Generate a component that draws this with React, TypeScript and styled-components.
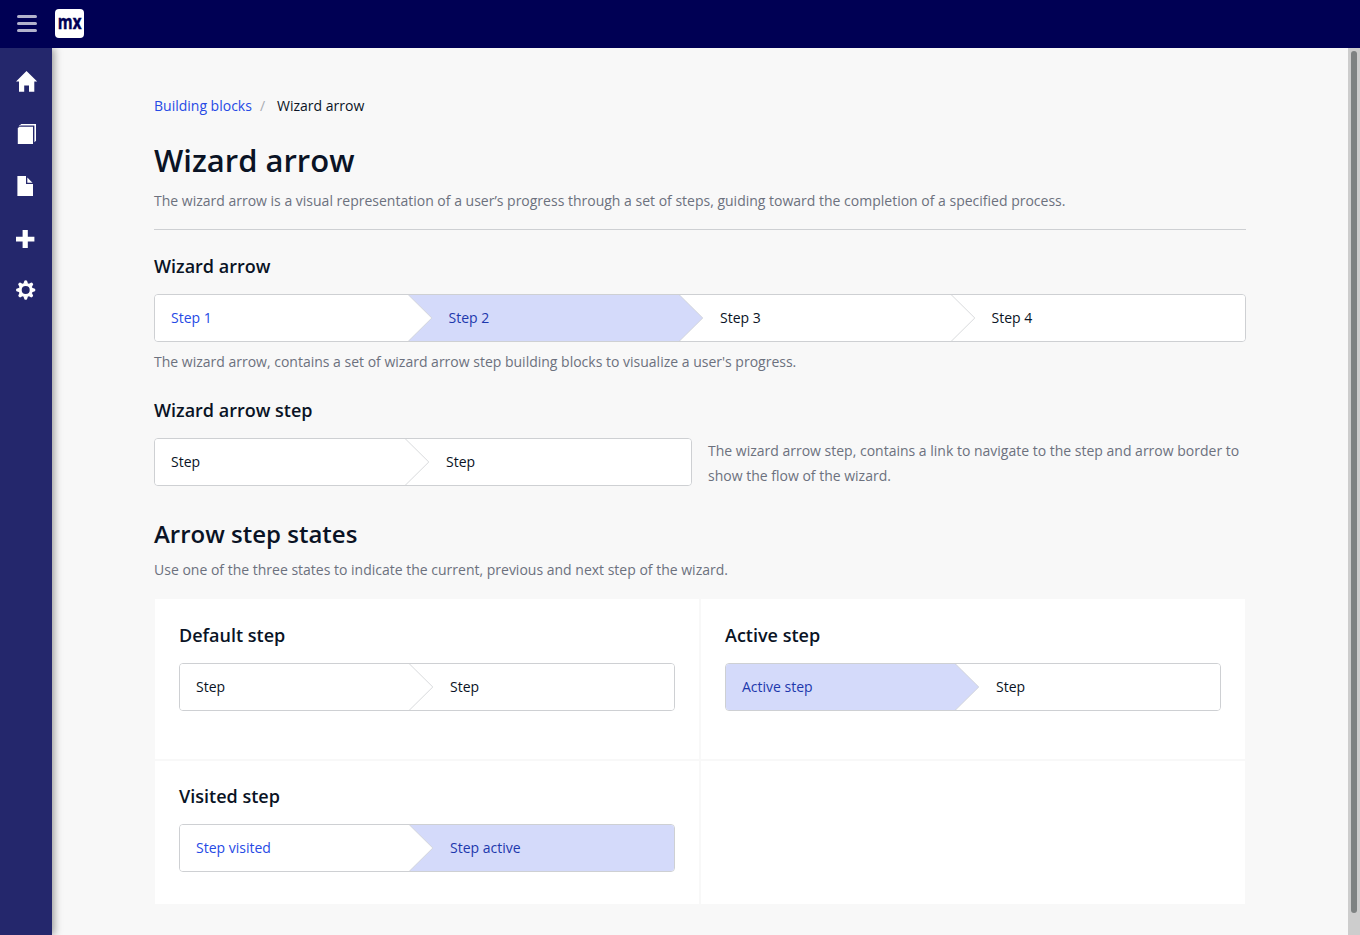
import React from "react";
import styled, { createGlobalStyle, css } from "styled-components";

const GlobalStyle = createGlobalStyle`
  *, *::before, *::after { box-sizing: border-box; }
  html, body { margin: 0; padding: 0; height: 100%; overflow: hidden; }
  body {
    background: #f8f8f8;
    color: #0a1325;
    font-family: "Open Sans", sans-serif;
    font-size: 14px;
    line-height: 20px;
  }
  h1, h2, h3, p, ul, ol { margin: 0; padding: 0; }
`;

const Page = styled.div`
  display: flex;
  flex-direction: column;
  height: 100vh;
`;

const TopBar = styled.header`
  display: flex;
  align-items: center;
  flex: none;
  height: 48px;
  padding-left: 17px;
  background: #000054;
`;

const MenuButton = styled.button`
  display: flex;
  flex-direction: column;
  gap: 4px;
  width: 20px;
  margin: -2px 18px 0 0;
  padding: 0;
  border: 0;
  background: none;
`;

const MenuLine = styled.span`
  height: 3px;
  border-radius: 2px;
  background: #b2b2cc;
`;

const Logo = styled.div`
  display: flex;
  align-items: center;
  justify-content: center;
  width: 29px;
  height: 29px;
  margin-top: -0.5px;
  border-radius: 4px;
  background: #fff;
`;

const LogoMark = styled.svg`
  display: block;
  overflow: visible;
  font-family: "Open Sans", sans-serif;
  font-size: 20px;
  font-weight: 700;
`;

const Body = styled.div`
  display: flex;
  flex: 1;
  min-height: 0;
`;

const Sidebar = styled.nav`
  display: flex;
  flex-direction: column;
  flex: none;
  width: 52px;
  padding-top: 8px;
  background: #24276c;
  box-shadow: 2px 0 8px rgba(0, 0, 0, 0.4);
  clip-path: inset(0 -30px 0 0);
`;

const NavItem = styled.a`
  display: block;
  flex: none;
  height: 52px;
  svg { display: block; }
`;

const Main = styled.main`
  flex: 1;
  min-width: 0;
  padding: 48px 102px 0;
`;

const ScrollTrack = styled.div`
  flex: none;
  width: 12px;
  padding: 3px;
  background: #cdcdcd;
`;

const ScrollThumb = styled.div`
  width: 6px;
  height: 862px;
  border-radius: 3px;
  background: #7e8282;
`;

const Breadcrumb = styled.ol`
  display: flex;
  height: 20px;
  list-style: none;
`;

const Crumb = styled.li<{ $link?: boolean }>`
  color: ${(p) => (p.$link ? "#264ae5" : "#0a1325")};
`;

const CrumbSeparator = styled.li`
  padding: 0 12px 0 8px;
  color: #a9acb3;
`;

const Title = styled.h1`
  margin-top: 23px;
  font-size: 31px;
  font-weight: 600;
  line-height: 42px;
`;

const Text = styled.p<{ $top?: number; $line?: number }>`
  margin-top: ${(p) => p.$top ?? 0}px;
  color: #6c717e;
  line-height: ${(p) => p.$line ?? 20}px;
`;

const Divider = styled.hr`
  height: 1px;
  margin: 18px 0 0;
  border: 0;
  background: #ced0d3;
`;

const Heading = styled.h2`
  margin-top: 29px;
  font-size: 24px;
  font-weight: 600;
  line-height: 34px;
`;

const Subheading = styled.h3<{ $top?: number }>`
  margin-top: ${(p) => p.$top ?? 0}px;
  font-size: 18px;
  font-weight: 600;
  line-height: 24px;
`;

const Split = styled.div`
  display: grid;
  grid-template-columns: 538px 1fr;
  column-gap: 16px;
`;

type StepState = "default" | "active" | "visited";

const stepColors: Record<StepState, { fill: string; text: string }> = {
  default: { fill: "#ffffff", text: "#0a1325" },
  active: { fill: "#d4dafa", text: "#1d38ad" },
  visited: { fill: "#ffffff", text: "#264ae5" },
};

const WizardBar = styled.div<{ $columns: string }>`
  display: grid;
  grid-template-columns: ${(p) => p.$columns};
  height: 48px;
  margin-top: 16px;
  overflow: hidden;
  border: 1px solid #ced0d3;
  border-radius: 4px;
`;

const StepBox = styled.div<{ $state: StepState; $first: boolean }>`
  position: relative;
  display: flex;
  align-items: center;
  padding-left: ${(p) => (p.$first ? 16 : 40)}px;
  ${(p) => css`
    background: ${stepColors[p.$state].fill};
    color: ${stepColors[p.$state].text};
  `}
`;

const Chevron = styled.svg`
  position: absolute;
  top: 0;
  left: -2px;
`;

const Tiles = styled.div`
  display: grid;
  grid-template-columns: 1fr 1fr;
  grid-template-rows: 162px 145px;
  margin-top: 18px;
`;

const Tile = styled.section<{ $top?: number }>`
  padding: ${(p) => p.$top ?? 24}px 24px 24px;
  border: 1px solid #f8f8f8;
  background: #fff;
`;

interface WizardStep {
  label: string;
  state?: StepState;
}

function Wizard({ steps, columns }: { steps: WizardStep[]; columns: string }) {
  return (
    <WizardBar $columns={columns}>
      {steps.map((step, i) => (
        <StepBox key={i} $state={step.state ?? "default"} $first={i === 0}>
          {i > 0 && (
            <Chevron width="26" height="46" viewBox="0 0 26 46">
              <path d="M0 -1H0.5L24.8 23L0.5 47H0Z" fill={stepColors[steps[i - 1].state ?? "default"].fill} />
              <path d="M0.5 -1L24.8 23L0.5 47" fill="none" stroke="#ced0d3" strokeWidth="0.8" />
            </Chevron>
          )}
          {step.label}
        </StepBox>
      ))}
    </WizardBar>
  );
}

const HomeIcon = () => (
  <svg width="52" height="52" viewBox="0 56 52 52" fill="#fff">
    <path d="M26.5 71L37.2 81.5H34.3V91.8H29V85.5H24.2V91.8H19V81.5H16Z" />
  </svg>
);

const PagesIcon = () => (
  <svg width="52" height="52" viewBox="0 108 52 52" fill="#fff">
    <path d="M17.8 128L19.8 126.8H33V144H17.8Z" />
    <path d="M18.6 126.3L21.3 124H36V140.8L34.4 142.2V125.4H20.6L19.4 126.3Z" />
  </svg>
);

const FileIcon = () => (
  <svg width="52" height="52" viewBox="0 160 52 52" fill="#fff">
    <path d="M17.4 176H26V184H33V196H17.4Z" />
    <path d="M27.3 177.6L32.5 182.7H27.3Z" />
  </svg>
);

const PlusIcon = () => (
  <svg width="52" height="52" viewBox="0 212 52 52" fill="#fff">
    <path d="M22.6 230H27.8V236.7H34.4V241.4H27.8V248H22.6V241.4H16V236.7H22.6Z" />
  </svg>
);

const GearIcon = () => (
  <svg width="52" height="52" viewBox="0 264 52 52" fill="#fff">
    <g transform="translate(25.7 290)">
      <circle r="5.5" fill="none" stroke="#fff" strokeWidth="3" />
      {[0, 45, 90, 135, 180, 225, 270, 315].map((angle) => (
        <path key={angle} transform={`rotate(${angle})`} d="M-2.3 -6.3L-1.3 -9.2Q0 -10.3 1.3 -9.2L2.3 -6.3Z" />
      ))}
    </g>
  </svg>
);

const navIcons = [HomeIcon, PagesIcon, FileIcon, PlusIcon, GearIcon];

export default function App() {
  return (
    <>
      <GlobalStyle />
      <Page>
        <TopBar>
          <MenuButton aria-label="Menu">
            <MenuLine />
            <MenuLine />
            <MenuLine />
          </MenuButton>
          <Logo>
            <LogoMark width="29" height="29" viewBox="0 0 29 29">
              <text x="2.8" y="20" textLength="23.6" lengthAdjust="spacingAndGlyphs" fill="#000054" stroke="#000054" strokeWidth="0.5">mx</text>
            </LogoMark>
          </Logo>
        </TopBar>
        <Body>
          <Sidebar>
            {navIcons.map((Icon, i) => (
              <NavItem key={i}>
                <Icon />
              </NavItem>
            ))}
          </Sidebar>
          <Main>
            <Breadcrumb>
              <Crumb $link>Building blocks</Crumb>
              <CrumbSeparator>/</CrumbSeparator>
              <Crumb>Wizard arrow</Crumb>
            </Breadcrumb>
            <Title>Wizard arrow</Title>
            <Text $top={10}>
              The wizard arrow is a visual representation of a user’s progress through a set of steps, guiding toward
              the completion of a specified process.
            </Text>
            <Divider />
            <Subheading $top={24}>Wizard arrow</Subheading>
            <Wizard
              columns="253.5px 271.5px 271.5px 1fr"
              steps={[
                { label: "Step 1", state: "visited" },
                { label: "Step 2", state: "active" },
                { label: "Step 3" },
                { label: "Step 4" },
              ]}
            />
            <Text $top={10}>
              The wizard arrow, contains a set of wizard arrow step building blocks to visualize a user's progress.
            </Text>
            <Subheading $top={26}>Wizard arrow step</Subheading>
            <Split>
              <Wizard columns="251px 1fr" steps={[{ label: "Step" }, { label: "Step" }]} />
              <Text $top={16} $line={25}>
                The wizard arrow step, contains a link to navigate to the step and arrow border to show the flow of the
                wizard.
              </Text>
            </Split>
            <Heading>Arrow step states</Heading>
            <Text $top={9}>Use one of the three states to indicate the current, previous and next step of the wizard.</Text>
            <Tiles>
              <Tile>
                <Subheading>Default step</Subheading>
                <Wizard columns="230px 1fr" steps={[{ label: "Step" }, { label: "Step" }]} />
              </Tile>
              <Tile>
                <Subheading>Active step</Subheading>
                <Wizard columns="230px 1fr" steps={[{ label: "Active step", state: "active" }, { label: "Step" }]} />
              </Tile>
              <Tile $top={23}>
                <Subheading>Visited step</Subheading>
                <Wizard
                  columns="230px 1fr"
                  steps={[
                    { label: "Step visited", state: "visited" },
                    { label: "Step active", state: "active" },
                  ]}
                />
              </Tile>
              <Tile />
            </Tiles>
          </Main>
          <ScrollTrack>
            <ScrollThumb />
          </ScrollTrack>
        </Body>
      </Page>
    </>
  );
}
